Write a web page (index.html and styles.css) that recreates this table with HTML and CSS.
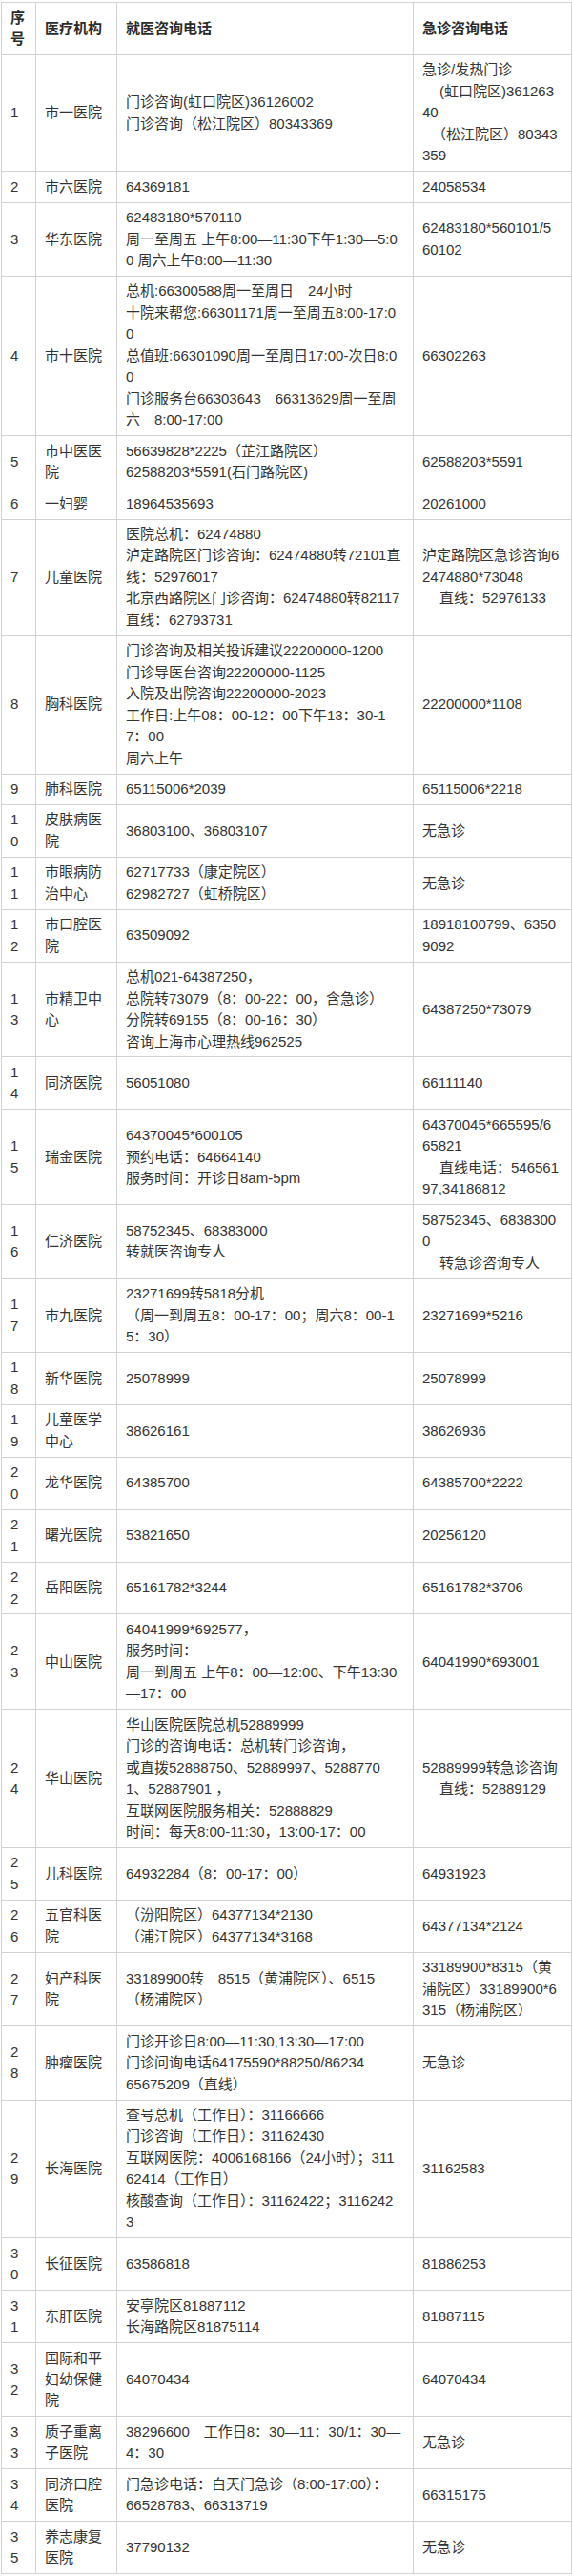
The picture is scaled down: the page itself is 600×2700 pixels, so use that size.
FILE: index.html
```html
<!DOCTYPE html>
<html lang="zh-CN">
<head>
<meta charset="utf-8">
<title>上海市医疗机构就医咨询电话</title>
<link rel="stylesheet" href="styles.css">
</head>
<body>
<div class="page">
<table class="tel">
<colgroup>
<col class="c-no"><col class="c-name"><col class="c-main"><col class="c-emg">
</colgroup>
<thead>
<tr><th>序<br>号</th><th>医疗机构</th><th>就医咨询电话</th><th>急诊咨询电话</th></tr>
</thead>
<tbody>
<tr><td>1</td><td>市一医院</td><td>门诊咨询(虹口院区)36126002<br>门诊咨询（松江院区）80343369</td><td>急诊/发热门诊<br><span class="ind">(虹口院区)361263</span><br>40<br><span class="ind2">（松江院区）80343</span><br>359</td></tr>
<tr><td>2</td><td>市六医院</td><td>64369181</td><td>24058534</td></tr>
<tr><td>3</td><td>华东医院</td><td>62483180*570110<br>周一至周五 上午8:00—11:30下午1:30—5:0<br>0 周六上午8:00—11:30</td><td>62483180*560101/5<br>60102</td></tr>
<tr><td>4</td><td>市十医院</td><td>总机:66300588周一至周日　24小时<br>十院来帮您:66301171周一至周五8:00-17:0<br>0<br>总值班:66301090周一至周日17:00-次日8:0<br>0<br>门诊服务台66303643　66313629周一至周<br>六　8:00-17:00</td><td>66302263</td></tr>
<tr><td>5</td><td>市中医医<br>院</td><td>56639828*2225（芷江路院区）<br>62588203*5591(石门路院区)</td><td>62588203*5591</td></tr>
<tr><td>6</td><td>一妇婴</td><td>18964535693</td><td>20261000</td></tr>
<tr><td>7</td><td>儿童医院</td><td>医院总机：62474880<br>泸定路院区门诊咨询：62474880转72101直<br>线：52976017<br>北京西路院区门诊咨询：62474880转82117<br>直线：62793731</td><td>泸定路院区急诊咨询6<br>2474880*73048<br><span class="ind">直线：52976133</span></td></tr>
<tr><td>8</td><td>胸科医院</td><td>门诊咨询及相关投诉建议22200000-1200<br>门诊导医台咨询22200000-1125<br>入院及出院咨询22200000-2023<br>工作日:上午08：00-12：00下午13：30-1<br>7：00<br>周六上午</td><td>22200000*1108</td></tr>
<tr><td>9</td><td>肺科医院</td><td>65115006*2039</td><td>65115006*2218</td></tr>
<tr><td>1<br>0</td><td>皮肤病医<br>院</td><td>36803100、36803107</td><td>无急诊</td></tr>
<tr><td>1<br>1</td><td>市眼病防<br>治中心</td><td>62717733（康定院区）<br>62982727（虹桥院区）</td><td>无急诊</td></tr>
<tr><td>1<br>2</td><td>市口腔医<br>院</td><td>63509092</td><td>18918100799、6350<br>9092</td></tr>
<tr><td>1<br>3</td><td>市精卫中<br>心</td><td>总机021-64387250，<br>总院转73079（8：00-22：00，含急诊）<br>分院转69155（8：00-16：30）<br>咨询上海市心理热线962525</td><td>64387250*73079</td></tr>
<tr><td>1<br>4</td><td>同济医院</td><td>56051080</td><td>66111140</td></tr>
<tr><td>1<br>5</td><td>瑞金医院</td><td>64370045*600105<br>预约电话：64664140<br>服务时间：开诊日8am-5pm</td><td>64370045*665595/6<br>65821<br><span class="ind">直线电话：546561</span><br>97,34186812</td></tr>
<tr><td>1<br>6</td><td>仁济医院</td><td>58752345、68383000<br>转就医咨询专人</td><td>58752345、6838300<br>0<br><span class="ind">转急诊咨询专人</span></td></tr>
<tr><td>1<br>7</td><td>市九医院</td><td>23271699转5818分机<br>（周一到周五8：00-17：00；周六8：00-1<br>5：30）</td><td>23271699*5216</td></tr>
<tr><td>1<br>8</td><td>新华医院</td><td>25078999</td><td>25078999</td></tr>
<tr><td>1<br>9</td><td>儿童医学<br>中心</td><td>38626161</td><td>38626936</td></tr>
<tr><td>2<br>0</td><td>龙华医院</td><td>64385700</td><td>64385700*2222</td></tr>
<tr><td>2<br>1</td><td>曙光医院</td><td>53821650</td><td>20256120</td></tr>
<tr><td>2<br>2</td><td>岳阳医院</td><td>65161782*3244</td><td>65161782*3706</td></tr>
<tr><td>2<br>3</td><td>中山医院</td><td>64041999*692577，<br>服务时间：<br>周一到周五 上午8：00—12:00、下午13:30<br>—17：00</td><td>64041990*693001</td></tr>
<tr><td>2<br>4</td><td>华山医院</td><td>华山医院医院总机52889999<br>门诊的咨询电话：总机转门诊咨询，<br>或直拨52888750、52889997、5288770<br>1、52887901 ，<br>互联网医院服务相关：52888829<br>时间：每天8:00-11:30，13:00-17：00</td><td>52889999转急诊咨询<br><span class="ind">直线：52889129</span></td></tr>
<tr><td>2<br>5</td><td>儿科医院</td><td>64932284（8：00-17：00）</td><td>64931923</td></tr>
<tr><td>2<br>6</td><td>五官科医<br>院</td><td>（汾阳院区）64377134*2130<br>（浦江院区）64377134*3168</td><td>64377134*2124</td></tr>
<tr><td>2<br>7</td><td>妇产科医<br>院</td><td>33189900转　8515（黄浦院区）、6515<br>（杨浦院区）</td><td>33189900*8315（黄<br>浦院区）33189900*6<br>315（杨浦院区）</td></tr>
<tr><td>2<br>8</td><td>肿瘤医院</td><td>门诊开诊日8:00—11:30,13:30—17:00<br>门诊问询电话64175590*88250/86234<br>65675209（直线）</td><td>无急诊</td></tr>
<tr><td>2<br>9</td><td>长海医院</td><td>查号总机（工作日）：31166666<br>门诊咨询（工作日）：31162430<br>互联网医院：4006168166（24小时）；311<br>62414（工作日）<br>核酸查询（工作日）：31162422；3116242<br>3</td><td>31162583</td></tr>
<tr><td>3<br>0</td><td>长征医院</td><td>63586818</td><td>81886253</td></tr>
<tr><td>3<br>1</td><td>东肝医院</td><td>安亭院区81887112<br>长海路院区81875114</td><td>81887115</td></tr>
<tr><td>3<br>2</td><td>国际和平<br>妇幼保健<br>院</td><td>64070434</td><td>64070434</td></tr>
<tr><td>3<br>3</td><td>质子重离<br>子医院</td><td>38296600　工作日8：30—11：30/1：30—<br>4：30</td><td>无急诊</td></tr>
<tr><td>3<br>4</td><td>同济口腔<br>医院</td><td>门急诊电话：白天门急诊（8:00-17:00）：<br>66528783、66313719</td><td>66315175</td></tr>
<tr><td>3<br>5</td><td>养志康复<br>医院</td><td>37790132</td><td>无急诊</td></tr>
</tbody>
</table>
</div>
</body>
</html>
```

FILE: styles.css
```css
html, body {
  margin: 0;
  padding: 0;
  background: #ffffff;
}

body {
  font-family: "Liberation Sans", "Noto Sans CJK SC", sans-serif;
  font-size: 15px;
  color: #333333;
}

.page {
  padding: 2px 1px 0 1px;
}

.tel {
  border-collapse: collapse;
  table-layout: fixed;
  width: 598px;
}

.c-no { width: 36px; }
.c-name { width: 85px; }
.c-main { width: 311px; }
.c-emg { width: 166px; }

.tel th,
.tel td {
  border: 1px solid #d2d2d2;
  padding: 4.5px 9px;
  line-height: 22.45px;
  white-space: nowrap;
  vertical-align: middle;
  text-align: left;
  overflow: hidden;
}

.tel th {
  font-weight: bold;
  color: #2b2b2b;
}

.ind {
  padding-left: 18px;
}

.ind2 {
  padding-left: 10px;
}
```
